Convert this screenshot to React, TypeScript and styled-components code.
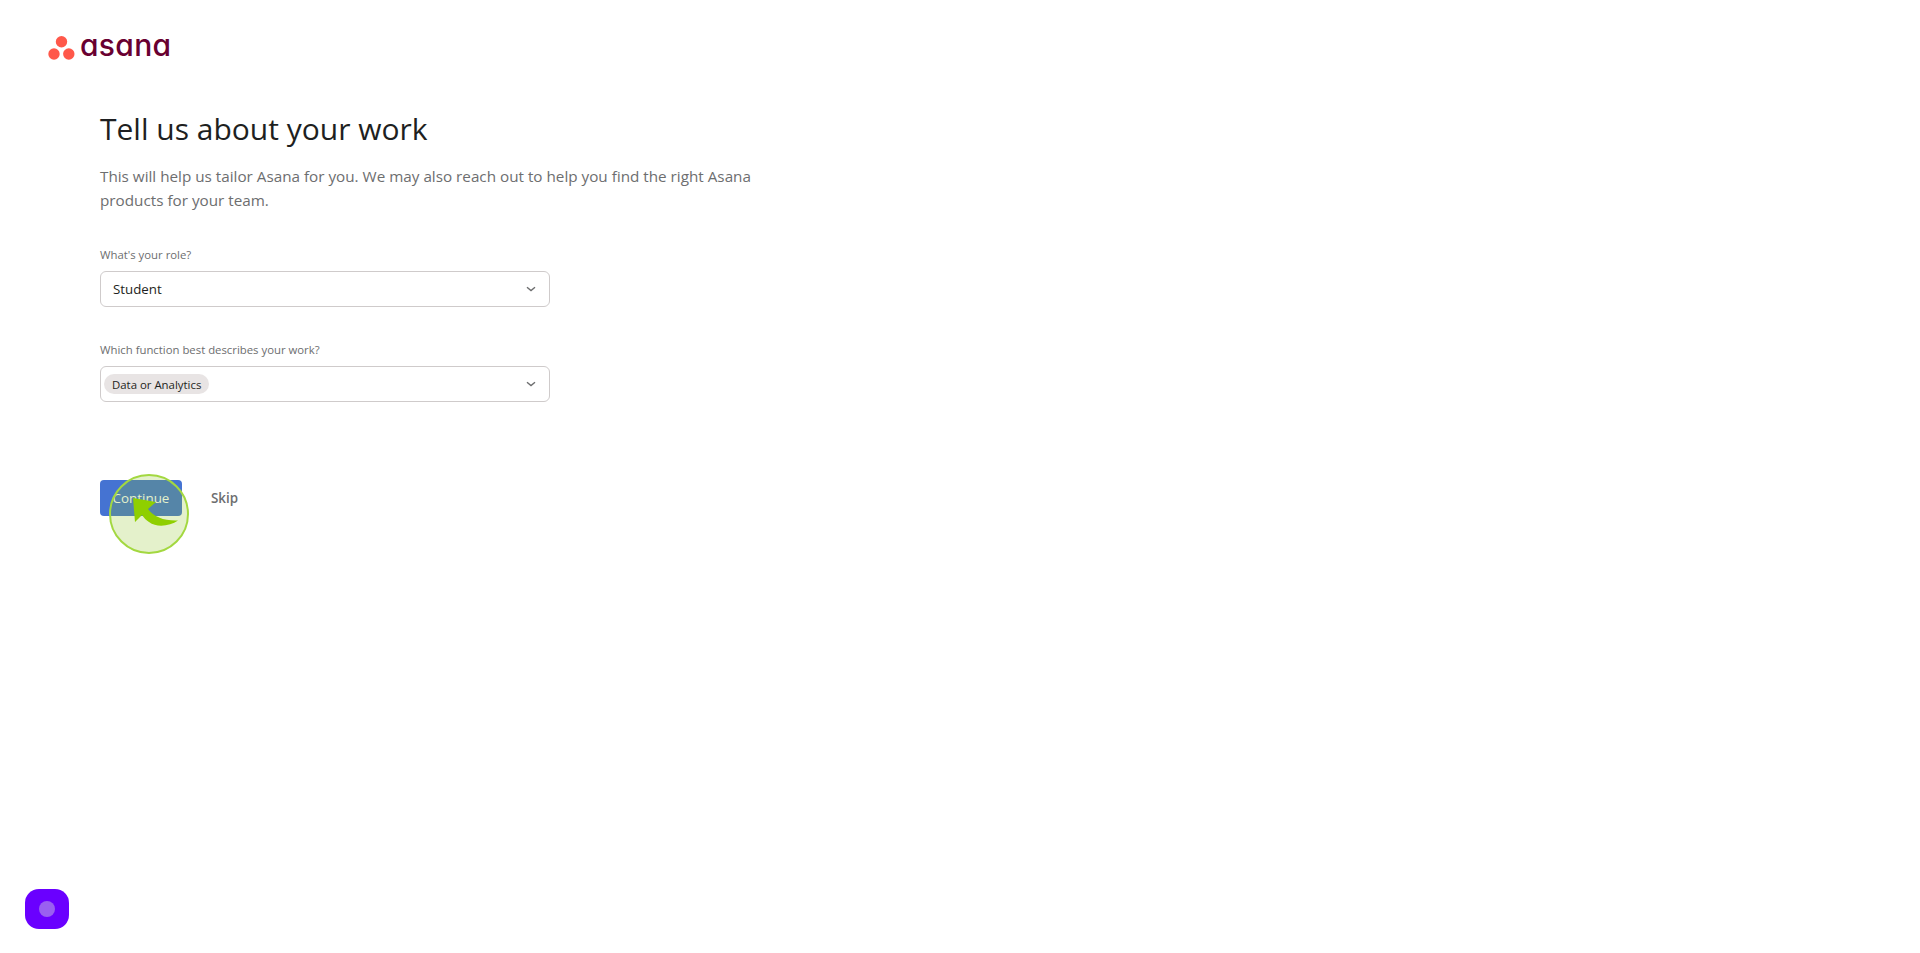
import React from "react";
import styled, { createGlobalStyle } from "styled-components";

const Global = createGlobalStyle`
  html, body { margin: 0; padding: 0; background: #fff; height: 100%; }
  body { font-family: "Open Sans", "Noto Sans", sans-serif; overflow: hidden; }
`;

const Page = styled.div`
  position: relative;
  width: 1920px;
  height: 953px;
  box-sizing: border-box;
  padding: 32px 0 0 48px;
`;

const LogoRow = styled.div`
  display: flex;
  align-items: center;
  gap: 5px;
  height: 32px;
`;

const LogoWord = styled.span`
  font-family: "Inter", sans-serif;
  font-feature-settings: "cv11" 1;
  font-size: 30px;
  font-weight: 500;
  letter-spacing: 0.3px;
  line-height: 26px;
  height: 32px;
  color: #690031;
`;

const Main = styled.main`
  display: flex;
  flex-direction: column;
  margin: 45px 0 0 52px;
  width: 680px;
`;

const Title = styled.h1`
  margin: 0;
  font-size: 30px;
  font-weight: 400;
  line-height: 40px;
  color: #1e1f21;
  font-family: "Open Sans", sans-serif;
`;

const Lead = styled.p`
  margin: 15px 0 0;
  width: 670px;
  font-size: 15.25px;
  line-height: 24px;
  color: #6d6e6f;
`;

const Field = styled.div`
  display: flex;
  flex-direction: column;
  width: 450px;
  margin-top: ${(p: { $top: number }) => p.$top}px;
`;

const Label = styled.label`
  font-size: 11.35px;
  line-height: 16px;
  height: 16px;
  margin-bottom: 8px;
  color: #6d6e6f;
`;

const Select = styled.div`
  display: flex;
  align-items: center;
  justify-content: space-between;
  box-sizing: border-box;
  height: 36px;
  padding: 0 13px 0 12px;
  border: 1px solid #cfcbcb;
  border-radius: 6px;
  background: #fff;
  font-size: 13.3px;
  color: #1e1f21;
`;

const TokenSelect = styled(Select)`
  padding-left: 3px;
`;

const Token = styled.span`
  display: inline-flex;
  align-items: center;
  height: 20px;
  padding: 0 8px;
  border-radius: 10px;
  background: #e8e4e4;
  font-size: 11.4px;
  color: #1e1f21;
`;

const Chevron = () => (
  <svg width="10" height="6" viewBox="0 0 10 6" fill="none">
    <path d="M1 1.2 L5 4.6 L9 1.2" stroke="#6d6e6f" strokeWidth="1.4" />
  </svg>
);

const Actions = styled.div`
  display: flex;
  align-items: center;
  gap: 29px;
  margin-top: 78px;
`;

const Continue = styled.button`
  box-sizing: border-box;
  width: 82px;
  height: 36px;
  padding: 0;
  border: 0;
  border-radius: 4px;
  background: #4573d2;
  color: #fff;
  font: 400 13.4px "Open Sans", sans-serif;
`;

const Skip = styled.button`
  padding: 0;
  border: 0;
  background: none;
  color: #6d6e6f;
  font: 600 13.4px "Open Sans", sans-serif;
`;

const Highlight = styled.div`
  position: absolute;
  left: 109px;
  top: 474px;
  width: 80px;
  height: 80px;
  box-sizing: border-box;
  border: 2px solid #a3d840;
  border-radius: 50%;
  background: rgba(139, 195, 30, 0.23);
`;

const Pointer = styled.svg`
  position: absolute;
  left: 130px;
  top: 495px;
`;

const Launcher = styled.div`
  position: absolute;
  left: 25px;
  top: 889px;
  width: 44px;
  height: 40px;
  display: flex;
  align-items: center;
  justify-content: center;
  border-radius: 14px;
  background: #6a00ff;
`;

const LauncherDot = styled.span`
  width: 16px;
  height: 16px;
  border-radius: 50%;
  background: #9a60f0;
`;

export default function App() {
  return (
    <Page>
      <Global />
      <LogoRow>
        <svg width="27" height="24" viewBox="0 0 27 24">
          <circle cx="13.5" cy="5.8" r="5.7" fill="#ff584a" />
          <circle cx="6" cy="18" r="5.7" fill="#ff584a" />
          <circle cx="20.8" cy="18" r="5.7" fill="#ff584a" />
        </svg>
        <LogoWord>asana</LogoWord>
      </LogoRow>
      <Main>
        <Title>Tell us about your work</Title>
        <Lead>
          This will help us tailor Asana for you. We may also reach out to help you find the right Asana products for your team.
        </Lead>
        <Field $top={35}>
          <Label>What's your role?</Label>
          <Select>
            <span>Student</span>
            <Chevron />
          </Select>
        </Field>
        <Field $top={35}>
          <Label>Which function best describes your work?</Label>
          <TokenSelect>
            <Token>Data or Analytics</Token>
            <Chevron />
          </TokenSelect>
        </Field>
        <Actions>
          <Continue>Continue</Continue>
          <Skip>Skip</Skip>
        </Actions>
      </Main>
      <Highlight />
      <Pointer width="52" height="36" viewBox="0 0 52 36">
        <path
          d="M3 3 L26 7 L18 14 C24 22 34 26 48 25.5 C40 31 27 33 19 27 C16 25 14 23 12 20 L5 27 Z"
          fill="#8fcf00"
        />
      </Pointer>
      <Launcher>
        <LauncherDot />
      </Launcher>
    </Page>
  );
}
